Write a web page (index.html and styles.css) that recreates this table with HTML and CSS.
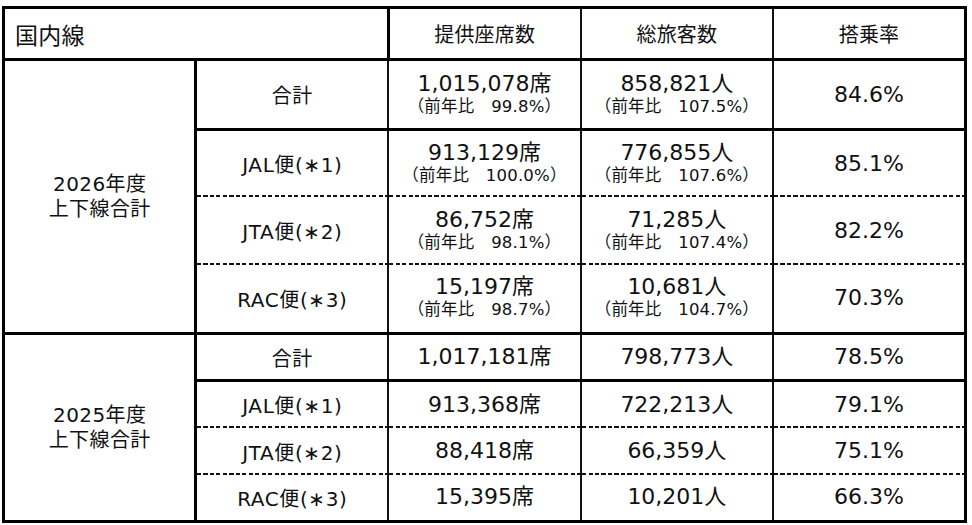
FILE: index.html
```html
<!DOCTYPE html>
<html lang="ja">
<head>
<meta charset="utf-8">
<title>国内線</title>
<link rel="stylesheet" href="styles.css">
</head>
<body>
<table class="stats">
  <colgroup>
    <col><col><col><col><col>
  </colgroup>
  <thead>
    <tr class="r-head">
      <th class="title" colspan="2">国内線</th>
      <th>提供座席数</th>
      <th>総旅客数</th>
      <th>搭乗率</th>
    </tr>
  </thead>
  <tbody class="year">
    <tr class="r-total tall">
      <td class="year-label" rowspan="4">2026年度<br>上下線合計</td>
      <td class="cat bold">合計</td>
      <td><div class="main">1,015,078席</div><div class="sub">（前年比　99.8%）</div></td>
      <td><div class="main">858,821人</div><div class="sub">（前年比　107.5%）</div></td>
      <td class="main">84.6%</td>
    </tr>
    <tr class="r-jal dash">
      <td class="cat">JAL便(∗1)</td>
      <td><div class="main">913,129席</div><div class="sub">（前年比　100.0%）</div></td>
      <td><div class="main">776,855人</div><div class="sub">（前年比　107.6%）</div></td>
      <td class="main">85.1%</td>
    </tr>
    <tr class="r-jta dash">
      <td class="cat">JTA便(∗2)</td>
      <td><div class="main">86,752席</div><div class="sub">（前年比　98.1%）</div></td>
      <td><div class="main">71,285人</div><div class="sub">（前年比　107.4%）</div></td>
      <td class="main">82.2%</td>
    </tr>
    <tr class="r-rac">
      <td class="cat">RAC便(∗3)</td>
      <td><div class="main">15,197席</div><div class="sub">（前年比　98.7%）</div></td>
      <td><div class="main">10,681人</div><div class="sub">（前年比　104.7%）</div></td>
      <td class="main">70.3%</td>
    </tr>
  </tbody>
  <tbody class="year">
    <tr class="r-total short">
      <td class="year-label" rowspan="4">2025年度<br>上下線合計</td>
      <td class="cat">合計</td>
      <td class="main">1,017,181席</td>
      <td class="main">798,773人</td>
      <td class="main">78.5%</td>
    </tr>
    <tr class="short dash">
      <td class="cat">JAL便(∗1)</td>
      <td class="main">913,368席</td>
      <td class="main">722,213人</td>
      <td class="main">79.1%</td>
    </tr>
    <tr class="short dash">
      <td class="cat">JTA便(∗2)</td>
      <td class="main">88,418席</td>
      <td class="main">66,359人</td>
      <td class="main">75.1%</td>
    </tr>
    <tr class="short">
      <td class="cat">RAC便(∗3)</td>
      <td class="main">15,395席</td>
      <td class="main">10,201人</td>
      <td class="main">66.3%</td>
    </tr>
  </tbody>
</table>
</body>
</html>
```

FILE: styles.css
```css
html, body {
  margin: 0;
  padding: 0;
  background: #fff;
}

body {
  padding: 6px 0 0 2px;
  font-family: "DejaVu Sans", "Noto Sans CJK JP", sans-serif;
  color: #111;
}

.stats {
  width: 965px;
  table-layout: fixed;
  border-collapse: collapse;
  border: 3px solid #000;
}

.stats th,
.stats td {
  border: 2px solid #111;
  padding: 0;
  text-align: center;
  vertical-align: middle;
  font-weight: normal;
}

.r-head {
  height: 52px;
}

.r-head th {
  border-bottom: 3px solid #000;
  font-size: 20px;
  letter-spacing: 0.2px;
}

.r-head th.title {
  text-align: left;
  padding-left: 10px;
  font-size: 23px;
  letter-spacing: 0.3px;
  border-right: 3px solid #000;
}

.year {
  border-top: 3px solid #000;
}

.stats td.year-label {
  font-size: 20px;
  line-height: 25px;
  letter-spacing: 0.4px;
  border-right: 3px solid #000;
}

.r-total td {
  border-bottom: 3px solid #000;
}

.tall { height: 70px; }
.r-jal { height: 67px; }
.r-jta { height: 68px; }
.r-rac { height: 69px; }
.short { height: 47px; }

.cat {
  font-size: 20px;
  letter-spacing: 0.6px;
}

.bold {
  font-weight: bold;
}

.main {
  font-size: 22px;
  line-height: 24px;
}

.sub {
  font-size: 16.5px;
  line-height: 22px;
  letter-spacing: 0.2px;
}

.stats tr.dash td:not(.year-label) {
  border-bottom: none;
  background-image: repeating-linear-gradient(to right, #111 0 4px, transparent 4px 6.5px);
  background-size: 100% 2px;
  background-position: left bottom;
  background-repeat: no-repeat;
}

.stats tr.dash + tr td {
  border-top: none;
}
```
